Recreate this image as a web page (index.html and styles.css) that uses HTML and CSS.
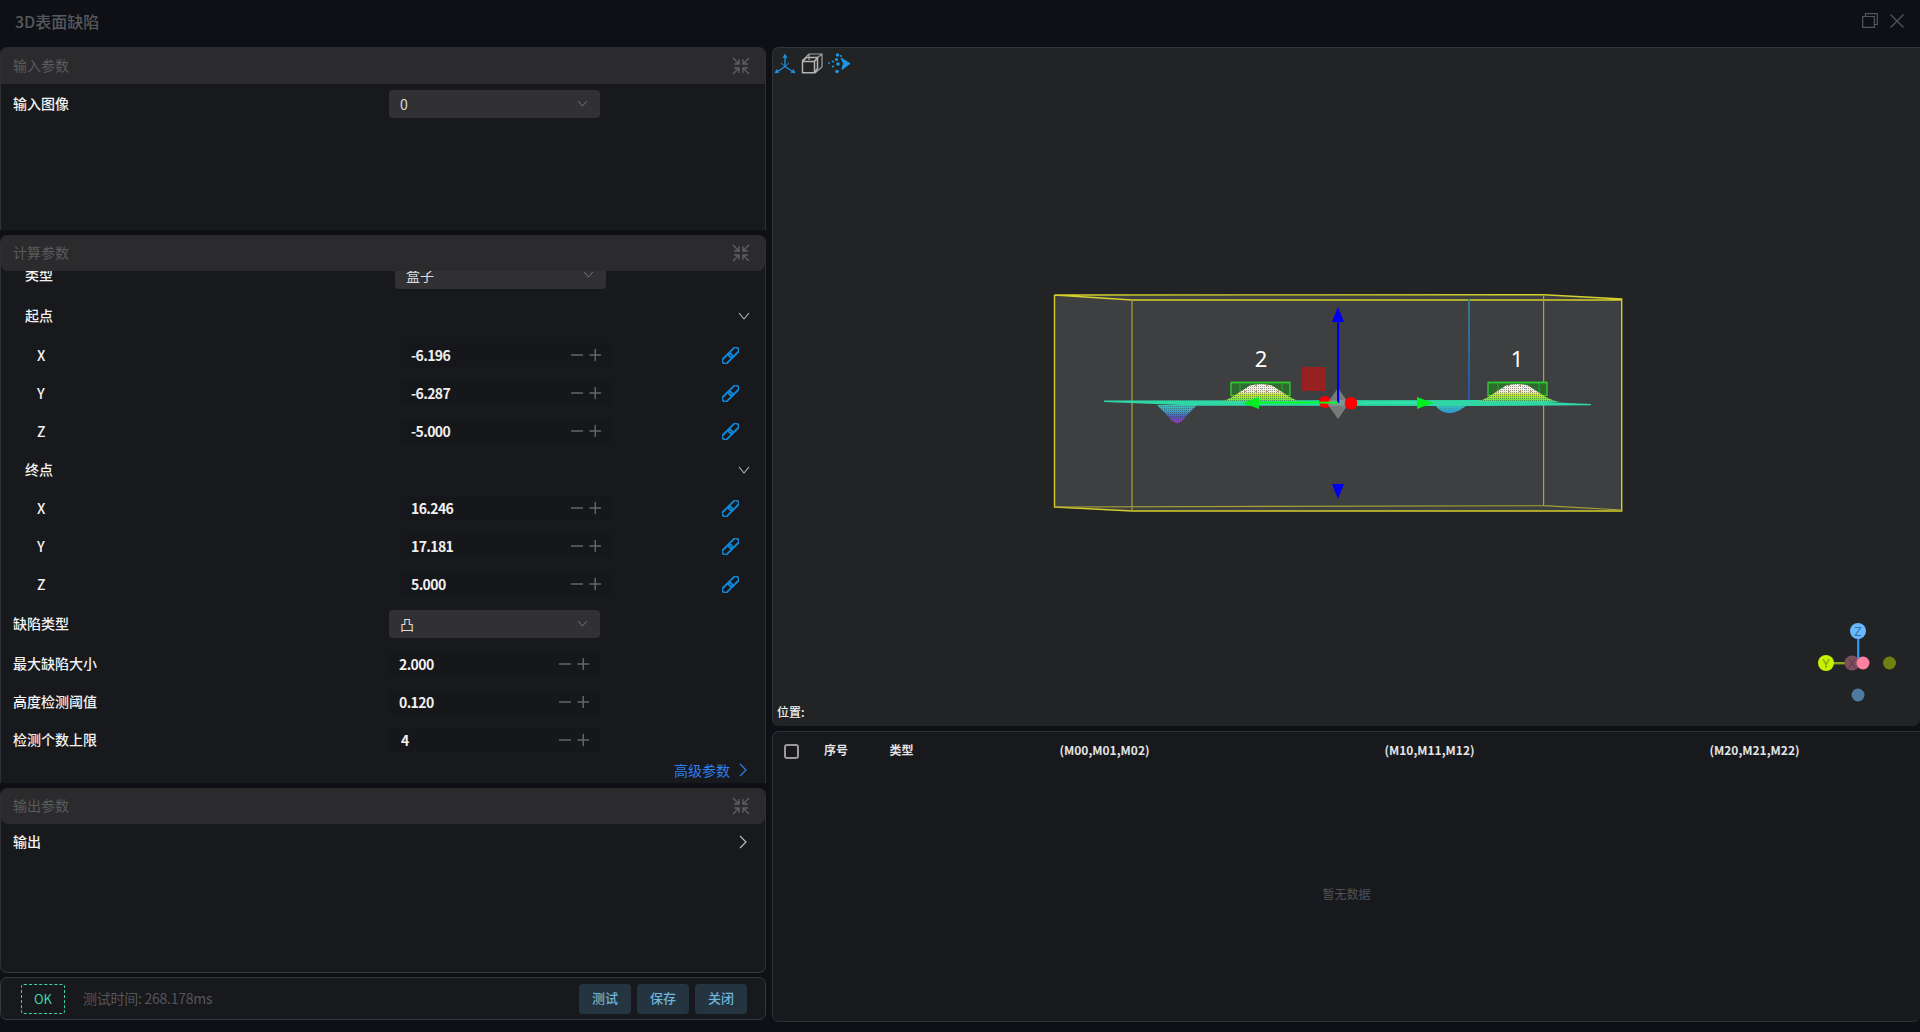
FILE: index.html
```html
<!DOCTYPE html>
<html lang="zh-CN">
<head>
<meta charset="utf-8">
<title>3D表面缺陷</title>
<link rel="stylesheet" href="styles.css">
</head>
<body>
<svg class="defs" width="0" height="0" aria-hidden="true">
  <defs>
    <symbol id="i-collapse" viewBox="0 0 18 18">
      <path d="M1 1L7 7M7 2.200V7H2.200M17 1L11 7M11 2.200V7H15.800M1 17L7 11M7 15.800V11H2.200M17 17L11 11M11 15.800V11H15.800" fill="none" stroke="currentColor" stroke-width="1.300"/>
    </symbol>
    <symbol id="i-chain" viewBox="0 0 17 17">
      <g transform="rotate(-45 8.5 8.5)" fill="none" stroke="currentColor" stroke-width="1.9">
        <rect x="-1.8" y="5.6" width="11.6" height="5.8" rx="2.4"/>
        <rect x="7.2" y="5.6" width="11.6" height="5.8" rx="2.4"/>
      </g>
    </symbol>
    <symbol id="i-down" viewBox="0 0 12 8">
      <path d="M1 1L6 7L11 1" fill="none" stroke="currentColor" stroke-width="1.1"/>
    </symbol>
    <symbol id="i-right" viewBox="0 0 8 14">
      <path d="M1 1L7 7L1 13" fill="none" stroke="currentColor" stroke-width="1.2"/>
    </symbol>
    <symbol id="i-stepper" viewBox="0 0 30 12">
      <path d="M0 6H12M18.500 6H30M24.250 0V12" fill="none" stroke="currentColor" stroke-width="1.400"/>
    </symbol>
  </defs>
</svg>

<div class="app">
  <header class="titlebar">
    <span class="title">3D表面缺陷</span>
    <div class="win-actions">
      <svg class="win-restore" viewBox="0 0 16 15"><path d="M0.700 3.500H12.300V14.300H0.700ZM3.500 3.500V0.700H15.300V11.500H12.300" fill="none" stroke="currentColor" stroke-width="1.200"/></svg>
      <svg class="win-close" viewBox="0 0 14 14"><path d="M0.500 0.500L13.500 13.500M13.500 0.500L0.500 13.500" fill="none" stroke="currentColor" stroke-width="1.300"/></svg>
    </div>
  </header>

  <main class="main">
    <section class="left">
      <div class="panel panel-input">
        <div class="panel-head"><span>输入参数</span><svg class="collapse"><use href="#i-collapse"/></svg></div>
        <div class="row row-first">
          <span class="label">输入图像</span>
          <div class="select"><span>0</span><svg class="sel-arrow"><use href="#i-down"/></svg></div>
        </div>
      </div>

      <div class="panel panel-calc">
        <div class="panel-head"><span>计算参数</span><svg class="collapse"><use href="#i-collapse"/></svg></div>
        <div class="calc-scroll">
          <div class="calc-inner">
            <div class="row row-tall lv1">
              <span class="label">类型</span>
              <div class="select"><span>盒子</span><svg class="sel-arrow"><use href="#i-down"/></svg></div>
            </div>
            <div class="section-head lv1 h-start"><span class="label">起点</span><svg class="sec-arrow"><use href="#i-down"/></svg></div>
            <div class="row lv2"><span class="axis">X</span><div class="field"><span class="num">-6.196</span><svg class="stepper"><use href="#i-stepper"/></svg></div><svg class="chain"><use href="#i-chain"/></svg></div>
            <div class="row lv2"><span class="axis">Y</span><div class="field"><span class="num">-6.287</span><svg class="stepper"><use href="#i-stepper"/></svg></div><svg class="chain"><use href="#i-chain"/></svg></div>
            <div class="row lv2"><span class="axis">Z</span><div class="field"><span class="num">-5.000</span><svg class="stepper"><use href="#i-stepper"/></svg></div><svg class="chain"><use href="#i-chain"/></svg></div>
            <div class="section-head lv1 h-end"><span class="label">终点</span><svg class="sec-arrow"><use href="#i-down"/></svg></div>
            <div class="row lv2"><span class="axis">X</span><div class="field"><span class="num">16.246</span><svg class="stepper"><use href="#i-stepper"/></svg></div><svg class="chain"><use href="#i-chain"/></svg></div>
            <div class="row lv2"><span class="axis">Y</span><div class="field"><span class="num">17.181</span><svg class="stepper"><use href="#i-stepper"/></svg></div><svg class="chain"><use href="#i-chain"/></svg></div>
            <div class="row lv2"><span class="axis">Z</span><div class="field"><span class="num">5.000</span><svg class="stepper"><use href="#i-stepper"/></svg></div><svg class="chain"><use href="#i-chain"/></svg></div>
            <div class="row row-defect lv0">
              <span class="label">缺陷类型</span>
              <div class="select"><span>凸</span><svg class="sel-arrow"><use href="#i-down"/></svg></div>
            </div>
            <div class="row lv0"><span class="label">最大缺陷大小</span><div class="field"><span class="num">2.000</span><svg class="stepper"><use href="#i-stepper"/></svg></div></div>
            <div class="row lv0"><span class="label">高度检测阈值</span><div class="field"><span class="num">0.120</span><svg class="stepper"><use href="#i-stepper"/></svg></div></div>
            <div class="row lv0"><span class="label">检测个数上限</span><div class="field"><span class="num num-int">4</span><svg class="stepper"><use href="#i-stepper"/></svg></div></div>
            <div class="advanced"><span>高级参数</span><svg class="adv-arrow"><use href="#i-right"/></svg></div>
          </div>
        </div>
      </div>

      <div class="panel panel-output">
        <div class="panel-head"><span>输出参数</span><svg class="collapse"><use href="#i-collapse"/></svg></div>
        <div class="output-row"><span class="label">输出</span><svg class="out-arrow"><use href="#i-right"/></svg></div>
      </div>

      <footer class="footer">
        <span class="ok">OK</span>
        <span class="time">测试时间: 268.178ms</span>
        <div class="btns">
          <button class="btn">测试</button>
          <button class="btn">保存</button>
          <button class="btn">关闭</button>
        </div>
      </footer>
    </section>

    <section class="right">
      <div class="viewer">
        <svg class="scene" viewBox="772 47 1148 679" xmlns="http://www.w3.org/2000/svg">
          <defs>
            <linearGradient id="g-bump" x1="0" y1="0" x2="0" y2="1">
              <stop offset="0" stop-color="#f8f6ee"/>
              <stop offset="0.45" stop-color="#eeeee0"/>
              <stop offset="0.56" stop-color="#cfe82c"/>
              <stop offset="0.85" stop-color="#78e83c"/>
              <stop offset="1" stop-color="#30d8a0"/>
            </linearGradient>
            <linearGradient id="g-pit" x1="0" y1="0" x2="0" y2="1">
              <stop offset="0" stop-color="#34c8b8"/>
              <stop offset="0.35" stop-color="#3a9ec8"/>
              <stop offset="0.62" stop-color="#4a58c0"/>
              <stop offset="1" stop-color="#b030d0"/>
            </linearGradient>
            <linearGradient id="g-pit2" x1="0" y1="0" x2="0" y2="1">
              <stop offset="0" stop-color="#30d0b0"/>
              <stop offset="1" stop-color="#2a98e0"/>
            </linearGradient>
            <linearGradient id="g-post" x1="0" y1="0" x2="0" y2="1">
              <stop offset="0" stop-color="#2a8ca0"/>
              <stop offset="1" stop-color="#2558c8"/>
            </linearGradient>
            <pattern id="p-dots" width="2" height="2" patternUnits="userSpaceOnUse">
              <rect x="0" y="0" width="1" height="1" fill="#3e3f41" fill-opacity="0.5"/>
            </pattern>
            <pattern id="p-specks" width="11" height="6" patternUnits="userSpaceOnUse">
              <rect x="1" y="1" width="2" height="1" fill="#d98a20"/>
              <rect x="7" y="4" width="1" height="1" fill="#c8a020"/>
            </pattern>
          </defs>

          <path class="box-fill" d="M1054.500 295L1132 300H1543.600L1621.700 299V510L1543.600 505.700L1132 511L1054.500 507Z"/>
          <path class="box-fill" d="M1054.500 295L1543.600 294.700L1621.700 299L1543.600 300H1132Z"/>
          <path class="box-fill" d="M1054.500 507L1132 511H1621.700L1543.600 505.700Z"/>
          <path class="box-line" d="M1054.500 295V507L1132 511H1621.700V299L1543.600 294.700L1054.500 295L1132 300H1621.700"/>
          <path class="box-line-dim" d="M1132 300V511M1543.600 294.700V505.700M1054.500 507L1543.600 505.700L1621.700 510"/>

          <rect x="1468.200" y="299" width="1.600" height="103" fill="url(#g-post)"/>

          <path d="M1434 404C1441 413 1447 413.500 1452 413C1458 412 1463 408 1469 404Z" fill="url(#g-pit2)"/>
          <path d="M1434 404C1441 413 1447 413.500 1452 413C1458 412 1463 408 1469 404Z" fill="url(#p-dots)" opacity="0.400"/>
          <path d="M1157 405L1166 414L1172 421L1177 423.500L1182 421L1188 414L1197 405Z" fill="url(#g-pit)"/>
          <path d="M1157 405L1166 414L1172 421L1177 423.500L1182 421L1188 414L1197 405Z" fill="url(#p-dots)"/>
          <path d="M1104 400.500L1500 400L1591 404V405.300L1470 406L1200 405.800L1104 402Z" fill="#2fd6a6"/>

          <rect class="det-box" x="1231" y="382.500" width="59" height="13"/>
          <path class="det-rib" d="M1240 382.500V395.500M1282 382.500V395.500"/>
          <path d="M1220 402C1228 400 1234 396 1240 392L1250 385.500Q1261 382.500 1272 385.500L1282 392C1288 396 1294 400 1302 402Z" fill="url(#g-bump)"/>
          <path d="M1220 402C1228 400 1234 396 1240 392L1250 385.500Q1261 382.500 1272 385.500L1282 392C1288 396 1294 400 1302 402Z" fill="url(#p-dots)"/>
          <path d="M1242 391L1250 385.500Q1261 382.500 1272 385.500L1280 391L1280 394H1242Z" fill="url(#p-specks)"/>
          <path class="det-top" d="M1231 382.500H1290"/>

          <rect class="det-box" x="1488" y="382.500" width="59" height="13"/>
          <path class="det-rib" d="M1498 382.500V395.500M1539 382.500V395.500"/>
          <path d="M1476 402C1484 400 1490 396 1496 392L1506 385.500Q1517 382.500 1528 385.500L1538 392C1544 396 1550 400 1560 402Z" fill="url(#g-bump)"/>
          <path d="M1476 402C1484 400 1490 396 1496 392L1506 385.500Q1517 382.500 1528 385.500L1538 392C1544 396 1550 400 1560 402Z" fill="url(#p-dots)"/>
          <path d="M1498 391L1506 385.500Q1517 382.500 1528 385.500L1536 391L1536 394H1498Z" fill="url(#p-specks)"/>
          <path class="det-top" d="M1488 382.500H1547"/>

          <text class="scene-num" x="1261" y="367">2</text>
          <text class="scene-num" x="1517" y="367">1</text>

          <rect x="1302" y="367" width="24" height="24" fill="#972020"/>
          <circle cx="1325" cy="402" r="6" fill="#ff0000"/>
          <path d="M1338 388L1349 403.500L1338 419L1327 403.500Z" fill="#8a8a8a" fill-opacity="0.780"/>
          <circle cx="1351" cy="403.300" r="6.300" fill="#ff0000"/>
          <rect x="1337" y="321" width="2.200" height="82" fill="#0000f0"/>
          <path d="M1338 306.700L1344 322H1332Z" fill="#0000f0"/>
          <path d="M1338 499L1344 484H1332Z" fill="#0000f0"/>
          <rect x="1256" y="401.700" width="82" height="1.800" fill="#00ff20"/>
          <rect x="1363" y="402" width="54" height="1.400" fill="#2ce8a0"/>
          <path d="M1243 403L1259 397V409Z" fill="#00ee20"/>
          <path d="M1433 403L1417 397V409Z" fill="#00ee20"/>

          <rect x="1857" y="631" width="2.400" height="32" fill="#2f8ff0"/>
          <rect x="1826" y="662" width="32" height="2.400" fill="#86a818"/>
          <circle cx="1889.500" cy="663" r="6.500" fill="#6f7f10"/>
          <circle cx="1858" cy="695" r="6.500" fill="#4d7a9e"/>
          <circle cx="1852" cy="663" r="7.500" fill="#7e4f5e"/>
          <text class="gz-text gz-x" x="1852" y="667.500">X</text>
          <circle cx="1863" cy="663" r="6.500" fill="#ff7f9f"/>
          <circle cx="1858" cy="631" r="8" fill="#66b8ff"/>
          <text class="gz-text gz-z" x="1858" y="635.500">Z</text>
          <circle cx="1826" cy="663" r="8" fill="#c8f000"/>
          <text class="gz-text gz-y" x="1826" y="667.500">Y</text>
        </svg>

        <div class="toolbar">
          <svg class="tool tool-axes" viewBox="0 0 22 20">
            <path d="M11 3V13M11 13L3.500 18M11 13L18.500 18" fill="none" stroke="#1b8fe0" stroke-width="1.400"/>
            <path d="M11 0L13.500 4.500H8.500ZM0.500 19.800L2.500 15.500L5.500 19.200ZM21.500 19.800L19.500 15.500L16.500 19.200Z" fill="#1b8fe0"/>
            <path d="M7 9.500L11 13L15 9.500" fill="none" stroke="#1b8fe0" stroke-width="1"/>
          </svg>
          <svg class="tool tool-cube" viewBox="0 0 22 21">
            <path d="M1 8L8 1H21V14L14 20M8 1V7M21 1L16 5" fill="none" stroke="#a0a0a0" stroke-width="1.200"/>
            <path d="M1.500 8.500H13.500V19.800H1.500ZM1.500 8.500L5.500 4.500H16.500V15.500L13.500 19.800M13.500 8.500L16.500 4.500" fill="none" stroke="#b4b4b4" stroke-width="1.500"/>
          </svg>
          <svg class="tool tool-dots" viewBox="0 0 22 20">
            <path d="M13 4.500L22 10L14 16L15.500 10Z" fill="#1b97e8" stroke="#1b97e8" stroke-width="1" stroke-linejoin="round"/>
            <circle cx="9.500" cy="1.500" r="1.700" fill="#1b97e8"/>
            <circle cx="8.500" cy="6" r="1.500" fill="#1b97e8"/>
            <circle cx="10" cy="10.500" r="1.800" fill="#1b97e8"/>
            <circle cx="9" cy="18" r="1.800" fill="#1b97e8"/>
            <circle cx="5" cy="8" r="1.100" fill="#1b97e8"/>
            <circle cx="5" cy="13" r="1.100" fill="#1b97e8"/>
            <circle cx="1" cy="9.500" r="0.900" fill="#1b97e8"/>
            <circle cx="13" cy="2.500" r="1.100" fill="#1b97e8"/>
          </svg>
        </div>
        <span class="position">位置:</span>
      </div>

      <div class="table">
        <div class="thead">
          <span class="th-check"><span class="checkbox"></span></span>
          <span class="th">序号</span>
          <span class="th">类型</span>
          <span class="th th-c">(M00,M01,M02)</span>
          <span class="th th-c">(M10,M11,M12)</span>
          <span class="th th-c">(M20,M21,M22)</span>
        </div>
        <div class="empty">暂无数据</div>
      </div>
    </section>
  </main>
</div>
</body>
</html>
```

FILE: styles.css
```css
* { box-sizing: border-box; }

html, body {
  margin: 0;
  height: 100%;
  overflow: hidden;
}

body {
  background: #0f1015;
  color: #f0f0f0;
  font-family: "Noto Sans CJK SC", "Noto Sans", sans-serif;
  font-size: 14px;
}

.defs { position: absolute; }

.app {
  height: 1032px;
  display: flex;
  flex-direction: column;
}

/* title bar */
.titlebar {
  height: 47px;
  flex: none;
  display: flex;
  align-items: flex-start;
  justify-content: space-between;
  padding: 10px 16px 0 15px;
  color: #57585c;
}

.title {
  font-size: 16px;
  line-height: 22px;
  font-weight: 500;
}

.win-actions {
  display: flex;
  align-items: flex-start;
  gap: 12px;
  padding-top: 3px;
  color: #55565a;
}

.win-restore { width: 16px; height: 15px; }
.win-close { width: 14px; height: 14px; margin-top: 1px; }

/* main layout */
.main {
  flex: 1;
  min-height: 0;
  display: flex;
  gap: 6px;
  padding-bottom: 10px;
}

.left {
  width: 766px;
  flex: none;
  display: flex;
  flex-direction: column;
}

.right {
  flex: 1;
  min-width: 0;
  display: flex;
  flex-direction: column;
  gap: 5px;
}

/* panels */
.panel {
  background: #18191d;
  border: 1px solid #2f3035;
  border-top: 0;
  border-bottom: 0;
  border-radius: 7px 7px 0 0;
  overflow: hidden;
}

.panel-input { height: 183px; margin-bottom: 5px; }
.panel-calc { height: 548px; margin-bottom: 5px; display: flex; flex-direction: column; }
.panel-output {
  height: 185px;
  margin-bottom: 4px;
  border-bottom: 1px solid #37383d;
  border-radius: 7px;
}

.panel-head {
  height: 36px;
  flex: none;
  background: #2b2b2d;
  border-radius: 7px;
  display: flex;
  align-items: center;
  justify-content: space-between;
  padding: 0 15px 2px 12px;
  color: #5a5b5e;
  position: relative;
  z-index: 1;
}

.panel-input .panel-head { height: 37px; border-radius: 7px 7px 0 0; }

.collapse {
  width: 18px;
  height: 18px;
  color: #606165;
  margin-top: 2px;
}

/* form rows */
.row {
  height: 38px;
  display: grid;
  align-items: center;
}

.row-first { grid-template-columns: 376px 211px; padding-left: 12px; height: 40px; }
.lv0 { grid-template-columns: 376px 211px; padding-left: 12px; }
.lv1 { grid-template-columns: 370px 211px; padding-left: 24px; }
.lv2 { grid-template-columns: 364px 211px 1fr; padding-left: 36px; }
.row-tall { height: 40px; }
.row-defect { height: 42px; }

.label {
  color: #f2f2f2;
  line-height: 20px;
  font-weight: 500;
  margin-bottom: 2px;
  white-space: nowrap;
}

.axis {
  color: #f2f2f2;
  font-weight: 500;
  line-height: 20px;
}

.select {
  height: 28px;
  background: #313134;
  border-radius: 4px;
  display: flex;
  align-items: center;
  justify-content: space-between;
  padding: 0 12px 1px 11px;
  color: #dedede;
}

.sel-arrow {
  width: 11px;
  height: 7px;
  color: #77787c;
}

.field {
  height: 24px;
  background: #16171a;
  border-radius: 4px;
  display: flex;
  align-items: center;
  justify-content: space-between;
  padding: 0 11px 0 10px;
}

.num {
  font-weight: 700;
  color: #f0f0f0;
  letter-spacing: -0.6px;
}

.num-int { padding-left: 2px; }

.stepper {
  width: 30px;
  height: 12px;
  color: #66676a;
}

.chain {
  width: 17px;
  height: 17px;
  margin-left: 110px;
  color: #0f88d8;
}

.section-head {
  display: flex;
  align-items: center;
  justify-content: space-between;
  padding-right: 15px;
}

.h-start { height: 41px; }
.h-end { height: 39px; }

.sec-arrow {
  width: 12px;
  height: 8px;
  color: #b9b9bb;
}

.calc-scroll {
  flex: 1;
  min-height: 0;
  overflow: hidden;
}

.calc-inner { margin-top: -16px; }

.advanced {
  height: 24px;
  display: flex;
  align-items: center;
  justify-content: flex-end;
  gap: 9px;
  padding: 0 18px 2px 0;
  color: #2f7fef;
}

.adv-arrow {
  width: 8px;
  height: 14px;
}

.output-row {
  height: 36px;
  display: flex;
  align-items: center;
  justify-content: space-between;
  padding: 0 18px 0 12px;
}

.out-arrow {
  width: 8px;
  height: 14px;
  color: #b9b9bb;
}

/* footer */
.footer {
  height: 43px;
  background: #18191d;
  border: 1px solid #37383d;
  border-radius: 7px;
  display: flex;
  align-items: center;
  padding: 0 18px 0 20px;
}

.ok {
  width: 44px;
  height: 30px;
  border: 1px dashed #3fd6a5;
  border-radius: 3px;
  color: #3fd6a5;
  display: flex;
  align-items: center;
  justify-content: center;
  font-size: 13px;
}

.time {
  margin-left: 18px;
  margin-bottom: 1px;
  color: #55565a;
  font-size: 14px;
  letter-spacing: -0.25px;
}

.btns {
  margin-left: auto;
  display: flex;
  gap: 6px;
}

.btn {
  width: 52px;
  height: 30px;
  border: 0;
  border-radius: 4px;
  background: #243440;
  color: #6fb4da;
  font: inherit;
  font-size: 13px;
  font-weight: 500;
  padding: 0 0 2px;
}

/* 3D viewer */
.viewer {
  position: relative;
  height: 679px;
  flex: none;
  background: #212325;
  border-top: 1px solid #34353a;
  border-left: 1px solid #34353a;
  border-radius: 7px 0 7px 7px;
  overflow: hidden;
}

.scene {
  position: absolute;
  left: -1px;
  top: -1px;
  width: 1148px;
  height: 679px;
}

.box-fill { fill: #3e3f41; }
.box-line { fill: none; stroke: #d6d02a; stroke-width: 1.4; }
.box-line-dim { fill: none; stroke: #a8a43a; stroke-width: 1.2; }
.det-box { fill: #2f6a2f; stroke: #2ecc2e; stroke-width: 1.4; }
.det-rib { fill: none; stroke: #2eaa2e; stroke-width: 1; }
.det-top { fill: none; stroke: #2ecc2e; stroke-width: 1.4; }

.scene-num {
  fill: #ffffff;
  font-family: "Noto Sans", sans-serif;
  font-size: 22px;
  text-anchor: middle;
}

.gz-text {
  font-family: "Noto Sans", sans-serif;
  font-size: 13px;
  text-anchor: middle;
}
.gz-x { fill: #5e3a48; }
.gz-y { fill: #7f9a10; }
.gz-z { fill: #3d7098; }

.toolbar {
  position: absolute;
  left: 1px;
  top: 5px;
  display: flex;
  gap: 5px;
}

.tool { width: 22px; height: 21px; }

.position {
  position: absolute;
  left: 4px;
  top: 655px;
  font-size: 12px;
  font-weight: 500;
  line-height: 18px;
  color: #f0f0f0;
}

/* table */
.table {
  flex: 1;
  min-height: 0;
  background: #18191d;
  border: 1px solid #2f3035;
  border-right: 0;
  border-radius: 7px 0 7px 7px;
  display: flex;
  flex-direction: column;
}

.thead {
  height: 38px;
  flex: none;
  display: grid;
  grid-template-columns: 51px 65.5px 52.5px 325px 325px 325px;
  align-items: center;
  font-size: 12px;
  font-weight: 700;
  color: #e4e4e4;
}

.th { margin-bottom: 3px; }

.th-check { padding-left: 11px; display: flex; }

.checkbox {
  width: 15px;
  height: 15px;
  border: 2px solid #9a9a9c;
  border-radius: 3px;
}

.th-c { text-align: center; }

.empty {
  flex: 1;
  display: flex;
  align-items: center;
  justify-content: center;
  padding-bottom: 4px;
  font-size: 12px;
  color: #505156;
}
```
